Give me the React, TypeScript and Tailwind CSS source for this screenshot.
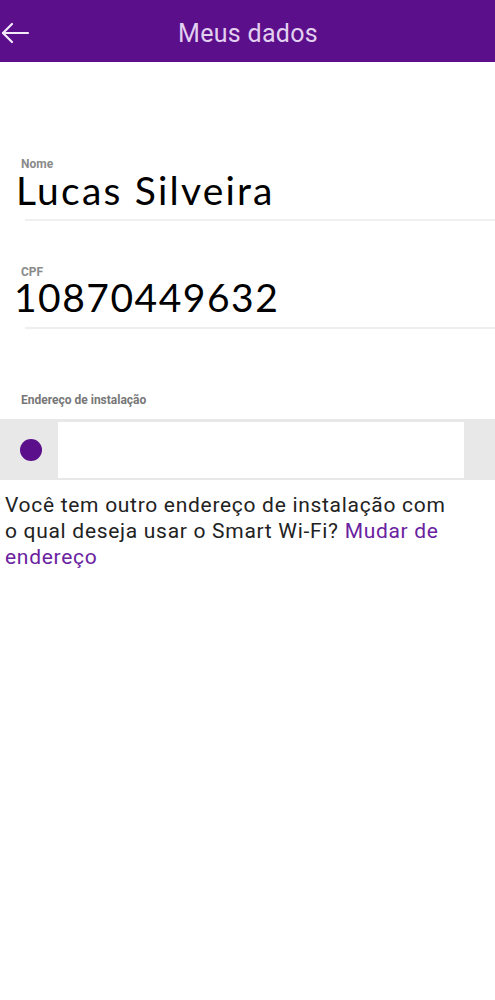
export default function App() {
  return (
    <div className="w-[495px] min-h-[1000px] bg-white font-['Roboto',sans-serif]">
      {/* Header */}
      <div className="relative h-[62px] bg-[#5c0f8b] flex items-center justify-center">
        <button type="button" aria-label="Voltar" className="absolute left-0 top-[19px] w-[30px] h-[28px] flex items-center">
          <svg width="30" height="28" viewBox="0 0 30 28" fill="none" stroke="#f3eafa" strokeWidth="2.2" strokeLinecap="round" strokeLinejoin="round">
            <path d="M28 14 H3" />
            <path d="M12 5 L3 14 L12 23" />
          </svg>
        </button>
        <h1 className="text-[25px] text-[#e2d0f0] pl-[1px] pt-[5px] leading-none tracking-[0.3px]">Meus dados</h1>
      </div>

      {/* Fields */}
      <div className="pt-[95px]">
        <div className="pl-[21px] text-[12px] font-bold text-[#8a8a8a] leading-[14px]">Nome</div>
        <div className="pl-[16px] text-[39px] text-black leading-[38px] tracking-[2.2px] font-['Lato',sans-serif]">Lucas Silveira</div>
        <div className="ml-[25px] mt-[10px] h-[2px] bg-[#efefef]" />

        <div className="mt-[44px] pl-[21px] text-[12px] font-bold text-[#8a8a8a] leading-[14px]">CPF</div>
        <div className="pl-[14px] text-[39px] text-black leading-[36px] tracking-[1.5px] font-['Lato',sans-serif]">10870449632</div>
        <div className="ml-[25px] mt-[12px] h-[2px] bg-[#efefef]" />

        <div className="mt-[64px] pl-[21px] text-[12px] font-bold text-[#777] leading-[14px]">Endereço de instalação</div>

        <div className="mt-[12px] h-[61px] bg-[#e8e8e8] flex items-center">
          <div className="w-[58px] flex justify-center">
            <span className="w-[22px] h-[22px] rounded-full bg-[#5c0f8b] ml-[3px]" />
          </div>
          <div className="w-[406px] h-[56px] bg-white" />
        </div>

        <p className="mt-[12px] pl-[5px] pr-[40px] text-[21px] leading-[26px] tracking-[0.7px] text-[#222]">
          Você tem outro endereço de instalação com o qual deseja usar o Smart Wi-Fi?{' '}
          <a href="#" className="text-[#6a22a0]">Mudar de endereço</a>
        </p>
      </div>
    </div>
  )
}
